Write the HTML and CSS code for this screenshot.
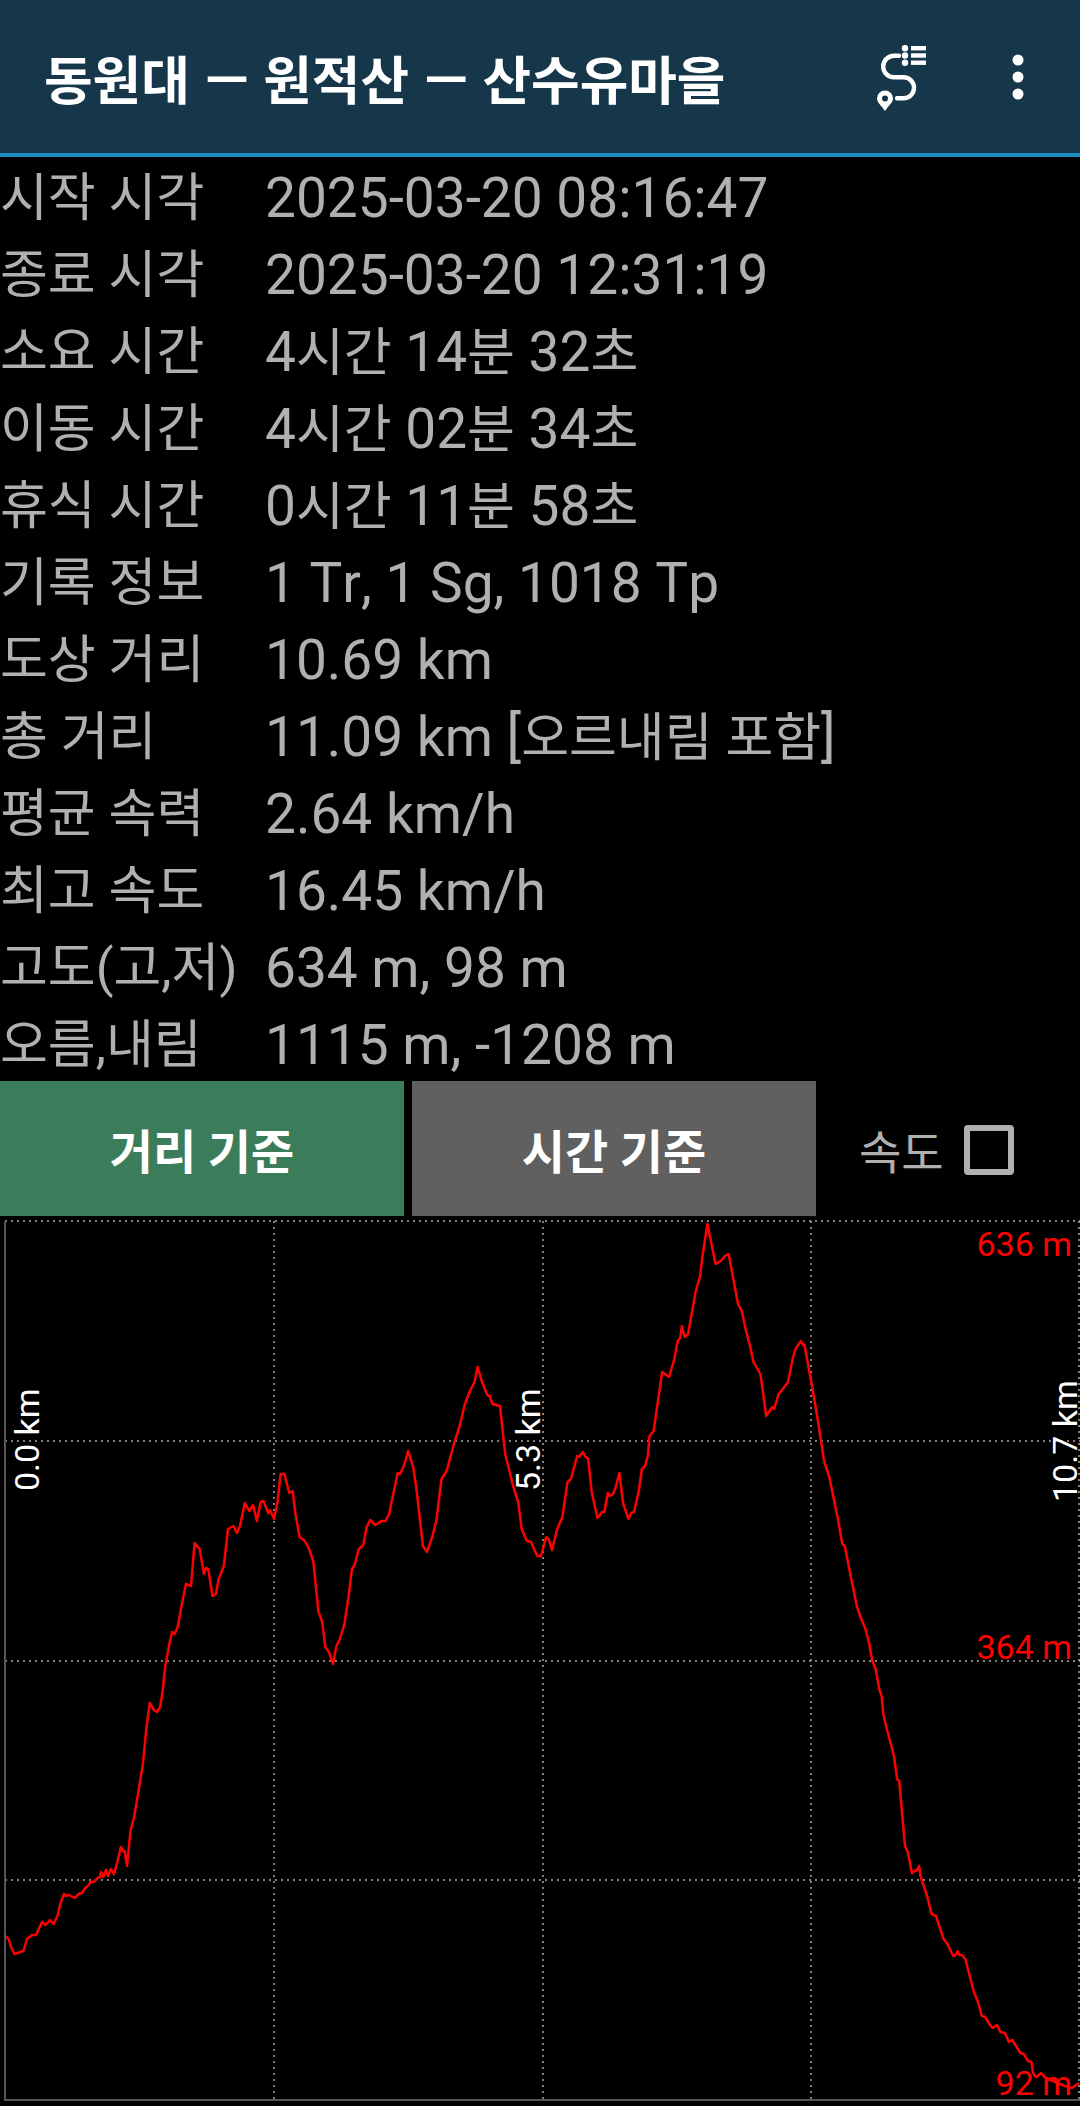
FILE: index.html
```html
<!DOCTYPE html>
<html lang="ko">

<head>
    <meta charset="utf-8">
    <title>동원대 — 원적산 — 산수유마을</title>
    <link rel="stylesheet" href="styles.css">
</head>

<body>
    <header class="toolbar">
        <h1 class="toolbar-title"><span class="ko">동원대</span> — <span class="ko">원적산</span> — <span class="ko">산수유마을</span></h1>
        <svg class="toolbar-icon route-icon" viewBox="870 40 60 75" width="60" height="75">
            <circle cx="905" cy="49.3" r="3.2" />
            <circle cx="905" cy="56.5" r="3.2" />
            <circle cx="905" cy="63.7" r="3.2" />
            <rect x="911" y="47" width="15" height="4.4" />
            <rect x="911" y="54.3" width="15" height="4.4" />
            <rect x="911" y="61.5" width="15" height="4.4" />
            <path class="route-line" d="M899 56.7H894A10.8 10.8 0 0 0 894 78.3H903.5A10.5 10.5 0 0 1 903.5 99.3H897" />
            <path fill-rule="evenodd" d="M885 112C881 106 877 103.500 877 99.500A8 8 0 0 1 893 99.500C893 103.500 889 106 885 112ZM885 96.500A3 3 0 1 0 885 102.500A3 3 0 1 0 885 96.500Z" />
        </svg>
        <svg class="toolbar-icon" viewBox="0 0 12 46" width="12" height="46">
            <circle cx="6" cy="6" r="5.500" />
            <circle cx="6" cy="23" r="5.500" />
            <circle cx="6" cy="40" r="5.500" />
        </svg>
    </header>

    <dl class="track-info">
        <dt>시작 시각</dt><dd>2025-03-20 08:16:47</dd>
        <dt>종료 시각</dt><dd>2025-03-20 12:31:19</dd>
        <dt>소요 시간</dt><dd>4<span class="ko">시간</span> 14<span class="ko">분</span> 32<span class="ko">초</span></dd>
        <dt>이동 시간</dt><dd>4<span class="ko">시간</span> 02<span class="ko">분</span> 34<span class="ko">초</span></dd>
        <dt>휴식 시간</dt><dd>0<span class="ko">시간</span> 11<span class="ko">분</span> 58<span class="ko">초</span></dd>
        <dt>기록 정보</dt><dd>1 Tr, 1 Sg, 1018 Tp</dd>
        <dt>도상 거리</dt><dd>10.69 km</dd>
        <dt>총 거리</dt><dd>11.09 km [<span class="ko">오르내림 포함</span>]</dd>
        <dt>평균 속력</dt><dd>2.64 km/h</dd>
        <dt>최고 속도</dt><dd>16.45 km/h</dd>
        <dt>고도(고,저)</dt><dd>634 m, 98 m</dd>
        <dt>오름,내림</dt><dd>1115 m, -1208 m</dd>
    </dl>

    <div class="chart-controls">
        <button type="button" class="mode-button mode-active">거리 기준</button>
        <button type="button" class="mode-button">시간 기준</button>
        <label class="speed-toggle">속도<span class="speed-box"></span></label>
    </div>

    <svg class="chart" viewBox="0 1217 1080 889" width="1080" height="889">
        <g class="grid">
            <line x1="5" y1="1222" x2="1080" y2="1222" />
            <line x1="5" y1="1442" x2="1080" y2="1442" />
            <line x1="5" y1="1662" x2="1080" y2="1662" />
            <line x1="5" y1="1881" x2="1080" y2="1881" />
            <line x1="274" y1="1222" x2="274" y2="2101" />
            <line x1="543" y1="1222" x2="543" y2="2101" />
            <line x1="811" y1="1222" x2="811" y2="2101" />
            <line x1="1079" y1="1222" x2="1079" y2="2101" />
        </g>
        <polyline class="axis" points="5,1222 5,2101 1080,2101" />
        <polyline class="profile" points="6,1937 9,1941 11,1948 14.500,1955 23.400,1952 27,1940 32,1936 36,1936 42,1923 45.500,1926 50,1921 53.400,1925 57.500,1917 60.300,1905 64,1895 66,1897 69,1896 75,1899 78.500,1895 82,1894 85.400,1889 88.800,1886 90.200,1883 93.700,1883 97.800,1879 99.900,1878 101.200,1873 103.300,1878 106,1871 108,1877 110.900,1870 114,1875 117.400,1863 120.900,1848 122.900,1852 124.700,1852 127,1867 130.500,1832 134.300,1817 137.700,1797 142.900,1765 146.300,1730 149.800,1704 153.900,1711 157,1713 160.100,1708 162.500,1693 165.300,1667 169.800,1643 172.200,1633 174.600,1635 177.700,1628 181.500,1607 186,1585 191,1587 194.600,1544 199.700,1550 203.900,1575 205.900,1569 208.300,1570 212.500,1597 215.900,1595 218.700,1580 223.800,1567 228,1530 233.500,1527 236.900,1534 240,1527 244.800,1504 249.300,1512 253.100,1506 256.900,1522 260.700,1503 263.400,1502 268.300,1514 270,1511 274.100,1520 277.500,1503 280.600,1475 284.400,1475 289.300,1494 292.700,1492 295.500,1515 299.600,1538 304.800,1542 309.200,1550 313.400,1563 318.500,1613 322,1622 325.400,1648 328.900,1653 333,1665 336.400,1647 339.900,1640 344.400,1625 348.500,1598 351.900,1570 354.700,1566 358.800,1550 363.300,1546 366.700,1528 370.200,1521 375.300,1526 381.500,1522 385.700,1522 389.100,1515 397.700,1474 400.100,1475 403.900,1467 408.100,1452 413.200,1468 416.700,1492 422.900,1547 427,1553 432.200,1538 436.300,1522 441.500,1480 446.600,1472 454.500,1443 459.700,1427 464.900,1405 470,1392 474.500,1383 477.600,1368 482.100,1383 487.300,1396 489.700,1397 492.400,1405 500,1407 505.200,1455 513.100,1487 518.200,1503 521.700,1530 526.900,1542 531,1543 537.200,1557 541,1557 546.200,1538 548.600,1540 552,1551 557.200,1530 562.400,1518 567.500,1483 571,1480 577.200,1457 578.900,1458 583,1453 584.800,1457 588.200,1460 591.700,1493 597.500,1519 602,1513 604.400,1513 607.800,1494 609.900,1497 613,1495 615.800,1488 619.200,1474 623.300,1505 628.500,1520 631.300,1514 634,1513 638.800,1492 641.900,1470 645,1467 647.800,1457 649.500,1437 653.600,1432 662.200,1373 669.100,1378 674.300,1360 677.700,1342 680.200,1339 681.900,1327 684.600,1338 688.100,1335 695.600,1293 700.100,1277 702.500,1257 707.400,1225 715.600,1265 720.800,1262 724.900,1257 728.700,1255 734.600,1287 738,1305 741.800,1312 745.600,1330 750,1347 753.500,1363 760.400,1375 766.200,1417 772.400,1408 774.200,1410 778.600,1395 782.800,1390 788,1383 793.100,1358 795.500,1350 801,1342 802.400,1345 804.500,1346 812,1387 817.200,1417 824.100,1462 829.300,1478 837.900,1520 842.300,1545 844.800,1547 849.900,1573 856.800,1607 860.200,1617 865.400,1630 868.900,1643 872.300,1662 875.700,1670 879.200,1690 881.600,1697 883.300,1715 886.100,1727 894,1757 897.100,1780 899.200,1782 905,1847 907.800,1853 911.900,1874 914.700,1872 917,1871 919.100,1867 920.500,1877 927.400,1898 931.500,1915 936,1917 943.600,1940 947.400,1945 953.200,1957 955.600,1956 957.700,1952 959.400,1956 961.800,1956 965.300,1960 973.900,1993 978,2003 981.800,2017 985.200,2018 989.400,2025 992.800,2029 997,2026 1000.400,2033 1004.900,2034 1009,2043 1012.400,2041 1020.400,2054 1023.800,2055 1028,2062 1031.400,2063 1033.100,2074 1034.800,2077 1036.900,2078 1041,2074 1044.500,2078 1053,2082 1060,2085 1065,2087 1072,2089 1079,2084" />
        <text class="dist-label" transform="translate(39 1492) rotate(-90)">0.0 km</text>
        <text class="dist-label" transform="translate(540 1492) rotate(-90)">5.3 km</text>
        <text class="dist-label" transform="translate(1077 1503) rotate(-90)">10.7 km</text>
        <text class="alt-label" x="1072" y="1257">636 m</text>
        <text class="alt-label" x="1072" y="1660">364 m</text>
        <text class="alt-label" x="1072" y="2096">92 m</text>
    </svg>
</body>

</html>
```

FILE: styles.css
```css
html,
body {
    margin: 0;
    background: #000;
}

body {
    width: 1080px;
    height: 2106px;
    overflow: hidden;
    font-family: Roboto, "Noto Sans CJK KR", sans-serif;
}

.toolbar {
    display: flex;
    align-items: center;
    height: 153px;
    padding: 0 0 0 44px;
    background-color: #16364a;
    border-bottom: 4px solid #1a8fbf;
}

.toolbar-title {
    flex: 1;
    margin: 0;
    font-size: 58px;
    font-weight: 500;
    color: #fff;
    white-space: nowrap;
}

.toolbar-title .ko {
    font-size: 52.800px;
    font-weight: 700;
}

.toolbar-icon {
    display: block;
    fill: #fff;
}

.route-icon {
    margin-right: 82px;
}

.toolbar svg:last-child {
    margin-right: 56px;
}

.route-line {
    fill: none;
    stroke: #fff;
    stroke-width: 4.400;
    stroke-linecap: round;
}

.track-info {
    display: grid;
    grid-template-columns: 265px 1fr;
    grid-auto-rows: 77px;
    margin: 0;
    font-size: 55px;
    font-kerning: none;
    line-height: 83px;
    color: #b0b0b0;
    white-space: nowrap;
}

.track-info dt {
    font-size: 52px;
}

.track-info dd {
    margin: 0;
}

.track-info .ko {
    font-size: 52px;
}

.chart-controls {
    display: flex;
    align-items: center;
    gap: 8px;
    height: 135px;
}

.mode-button {
    width: 404px;
    height: 135px;
    padding: 0;
    border: none;
    font-family: inherit;
    font-size: 47px;
    font-weight: 700;
    color: #fff;
    background-color: #606060;
}

.mode-active {
    background-color: #3b7d5a;
}

.speed-toggle {
    display: flex;
    align-items: center;
    gap: 20px;
    margin-left: 35px;
    font-size: 46px;
    color: #b0b0b0;
}

.speed-box {
    width: 38px;
    height: 38px;
    margin-top: 3px;
    border: 6px solid #b0b0b0;
    border-radius: 4px;
}

.chart {
    display: block;
}

.grid line {
    stroke: #aaa;
    stroke-width: 1.500;
    stroke-dasharray: 2 4;
}

.axis {
    fill: none;
    stroke: #555;
    stroke-width: 2;
}

.profile {
    fill: none;
    stroke: #f00;
    stroke-width: 2.500;
    stroke-linejoin: round;
}

.chart text {
    font-size: 34px;
}

.dist-label {
    fill: #fff;
}

.alt-label {
    fill: #f00;
    text-anchor: end;
}
```
